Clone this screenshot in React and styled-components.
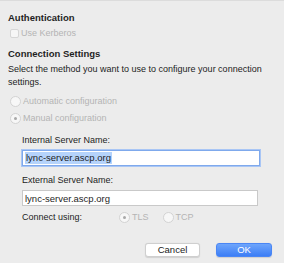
import React from 'react';
import styled, { createGlobalStyle } from 'styled-components';

const GlobalStyle = createGlobalStyle`
  html, body {
    margin: 0;
    padding: 0;
    background: #ececec;
  }
  body {
    font-family: "Liberation Sans", Arial, sans-serif;
    -webkit-font-smoothing: antialiased;
  }
`;

const Panel = styled.div`
  width: 284px;
  height: 263px;
  box-sizing: border-box;
  background: #ececec;
  border-top: 1px solid #dcdcdc;
  padding: 11px 8px 0 8px;
  display: flex;
  flex-direction: column;
  font-size: 9px;
  color: #1c1c1c;
`;

const SectionTitle = styled.div`
  font-weight: bold;
  font-size: 9.5px;
  line-height: 12px;
  color: #1f1f1f;
  margin-top: ${(p) => p.$top || 0}px;
`;

const OptionRow = styled.label`
  display: flex;
  align-items: center;
  gap: 2px;
  height: 12px;
  margin-top: ${(p) => p.$top || 0}px;
  margin-left: ${(p) => p.$indent || 0}px;
  color: ${(p) => (p.$disabled ? '#b4b4b4' : '#222')};
`;

const Check = styled.span`
  width: 9px;
  height: 9px;
  box-sizing: border-box;
  border: 1px solid #d6d6d6;
  border-radius: 2px;
  background: #f6f6f6;
  margin-left: 2px;
`;

const Radio = styled.span`
  width: 11px;
  height: 11px;
  box-sizing: border-box;
  border: 1px solid #d3d3d3;
  border-radius: 50%;
  background: #f7f7f7;
  display: flex;
  align-items: center;
  justify-content: center;
  flex-shrink: 0;

  &::after {
    content: '';
    display: ${(p) => (p.$checked ? 'block' : 'none')};
    width: 3px;
    height: 3px;
    border-radius: 50%;
    background: #a8a8a8;
  }
`;

const Description = styled.p`
  margin: 3px 0 0 0;
  line-height: 13px;
`;

const Indented = styled.div`
  margin-left: 14px;
  display: flex;
  flex-direction: column;
`;

const FieldLabel = styled.div`
  line-height: 12px;
  margin-top: ${(p) => p.$top || 0}px;
`;

const Input = styled.div`
  margin-top: 4px;
  width: ${(p) => p.$width}px;
  height: 16px;
  box-sizing: border-box;
  background: #fff;
  border: 1px solid ${(p) => (p.$focused ? '#7fa9ec' : '#c9c9c9')};
  box-shadow: ${(p) => (p.$focused ? '0 0 0 1px #a9c6f5' : 'none')};
  display: flex;
  align-items: center;
  padding-left: 2px;
  font-size: 9.5px;
  color: #1e1e1e;
`;

const Selected = styled.span`
  background: #b5d3fb;
  line-height: 12px;
  padding: 0 1px;
`;

const ConnectRow = styled.div`
  display: flex;
  align-items: center;
  margin-top: 5px;
  height: 12px;
`;

const ConnectLabel = styled.span`
  width: 97px;
`;

const RadioGroup = styled.div`
  display: flex;
  gap: 14px;
`;

const Footer = styled.div`
  display: flex;
  justify-content: flex-end;
  gap: 16px;
  margin-top: auto;
  margin-bottom: 6px;
  padding-right: 4px;
`;

const Button = styled.button`
  width: ${(p) => (p.$primary ? 56 : 55)}px;
  height: 14px;
  box-sizing: border-box;
  border-radius: 3px;
  font-family: "Liberation Sans", Arial, sans-serif;
  font-size: 9.5px;
  padding: 0;
  line-height: 12px;
  border: 1px solid ${(p) => (p.$primary ? '#4a86f5' : '#cfcfcf')};
  background: ${(p) =>
    p.$primary ? 'linear-gradient(#6ea5fb, #3c7ef6)' : '#ffffff'};
  color: ${(p) => (p.$primary ? '#ffffff' : '#222')};
  box-shadow: 0 0.5px 1px rgba(0, 0, 0, 0.12);
`;

export default function App() {
  return (
    <>
      <GlobalStyle />
      <Panel>
        <SectionTitle>Authentication</SectionTitle>
        <OptionRow $disabled $top={3}>
          <Check />
          <span>Use Kerberos</span>
        </OptionRow>
        <SectionTitle $top={9}>Connection Settings</SectionTitle>
        <Description>
          Select the method you want to use to configure your connection settings.
        </Description>
        <OptionRow $disabled $top={6} $indent={2}>
          <Radio />
          <span>Automatic configuration</span>
        </OptionRow>
        <OptionRow $disabled $top={5} $indent={2}>
          <Radio $checked />
          <span>Manual configuration</span>
        </OptionRow>
        <Indented>
          <FieldLabel $top={10}>Internal Server Name:</FieldLabel>
          <Input $focused $width={238}>
            <Selected>lync-server.ascp.org</Selected>
          </Input>
          <FieldLabel $top={8}>External Server Name:</FieldLabel>
          <Input $width={236}>lync-server.ascp.org</Input>
          <ConnectRow>
            <ConnectLabel>Connect using:</ConnectLabel>
            <RadioGroup>
              <OptionRow $disabled>
                <Radio $checked />
                <span>TLS</span>
              </OptionRow>
              <OptionRow $disabled>
                <Radio />
                <span>TCP</span>
              </OptionRow>
            </RadioGroup>
          </ConnectRow>
        </Indented>
        <Footer>
          <Button>Cancel</Button>
          <Button $primary>OK</Button>
        </Footer>
      </Panel>
    </>
  );
}
